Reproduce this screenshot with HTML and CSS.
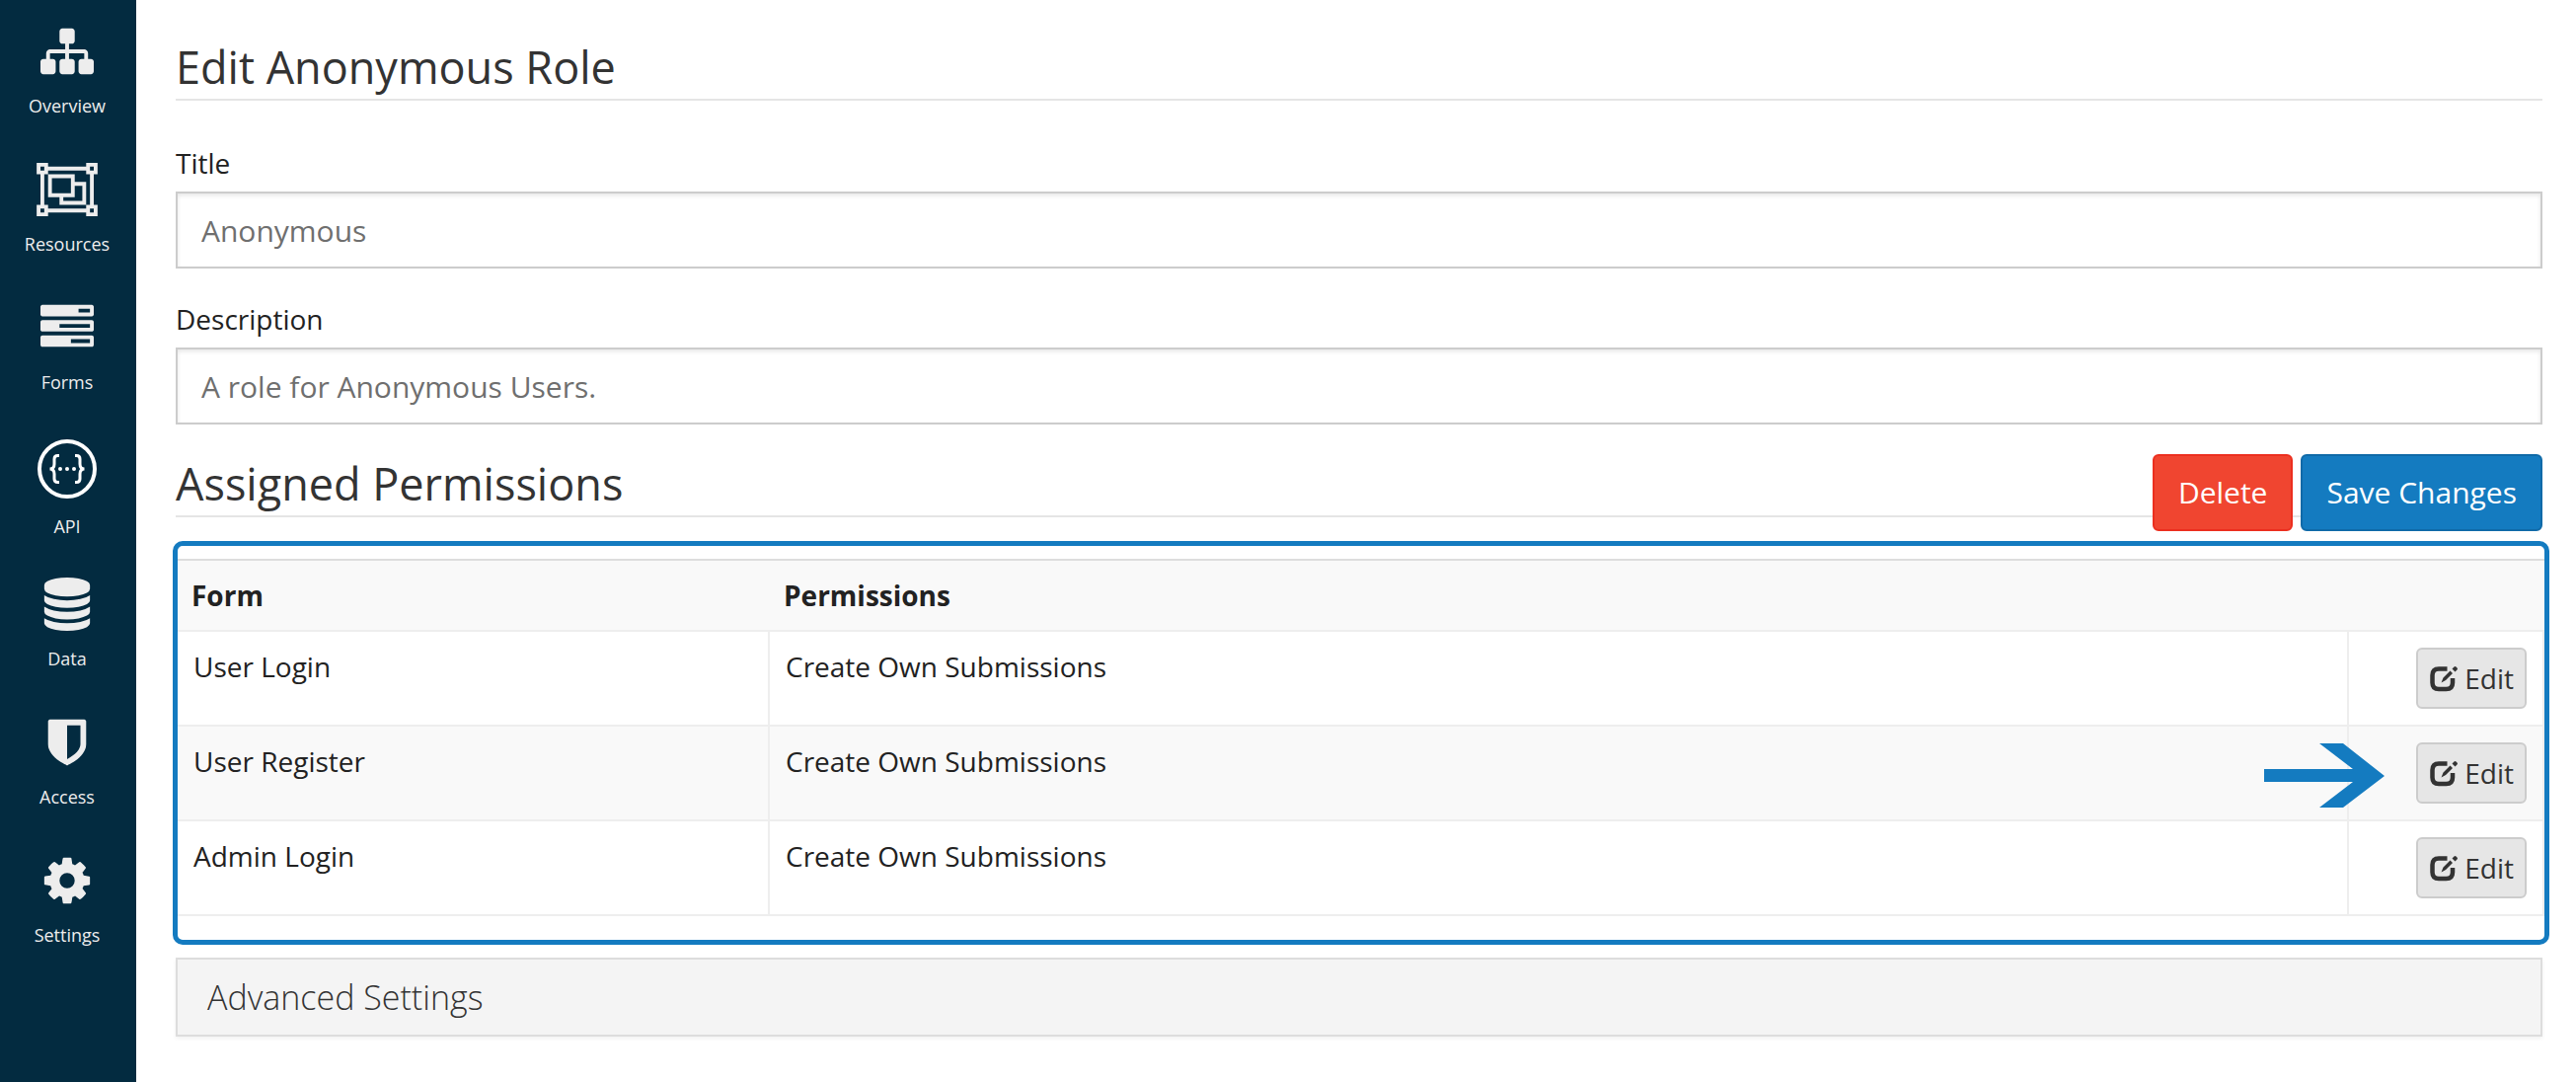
FILE: index.html
```html
<!DOCTYPE html>
<html lang="en">
<head>
<meta charset="utf-8">
<title>Edit Anonymous Role</title>
<link rel="stylesheet" href="styles.css">
</head>
<body>
<svg class="sprite" aria-hidden="true">
  <symbol id="icon-edit" viewBox="0 0 30 28">
    <path d="M18.500 4.500H10Q3.500 4.500 3.500 11V18.500Q3.500 25 10 25H17.500Q24 25 24 18.500V14" fill="none" stroke="currentColor" stroke-width="4.500"/>
    <path d="M12.500 18.500L14.500 13.500L21.500 6.500L24 9L17 16ZM23.500 4.500L25.500 2.500Q26.500 1.500 27.500 2.500L28.500 3.500Q29.500 4.500 28.500 5.500L26.500 7.500Z" fill="currentColor"/>
  </symbol>
</svg>
<div class="layout">
  <nav class="sidebar" aria-label="Project">
    <a class="nav-item" href="#overview">
      <svg class="nav-icon" viewBox="0 0 1792 1792" aria-hidden="true"><path d="M1792 1248v320q0 40-28 68t-68 28h-320q-40 0-68-28t-28-68v-320q0-40 28-68t68-28h96v-192h-512v192h96q40 0 68 28t28 68v320q0 40-28 68t-68 28h-320q-40 0-68-28t-28-68v-320q0-40 28-68t68-28h96v-192h-512v192h96q40 0 68 28t28 68v320q0 40-28 68t-68 28h-320q-40 0-68-28t-28-68v-320q0-40 28-68t68-28h96v-192q0-52 38-90t90-38h512v-192h-96q-40 0-68-28t-28-68v-320q0-40 28-68t68-28h320q40 0 68 28t28 68v320q0 40-28 68t-68 28h-96v192h512q52 0 90 38t38 90v192h96q40 0 68 28t28 68z"/></svg>
      <span>Overview</span>
    </a>
    <a class="nav-item" href="#resources">
      <svg class="nav-icon nav-icon-wide" viewBox="0 0 2048 1792" aria-hidden="true"><path fill-rule="evenodd" d="M2048 384H1920V1408H2048V1792H1664V1664H384V1792H0V1408H128V384H0V0H384V128H1664V0H2048ZM1792 128V256H1920V128ZM128 128V256H256V128ZM128 1536V1664H256V1536ZM1792 1536V1664H1920V1536ZM1664 1536V1408H1792V384H1664V256H384V384H256V1408H384V1536ZM384 384H1280V640H1664V1408H768V1152H384ZM512 512V1024H1152V512ZM1280 768V1152H896V1280H1536V768Z"/></svg>
      <span>Resources</span>
    </a>
    <a class="nav-item" href="#forms">
      <svg class="nav-icon" viewBox="0 0 1792 1792" aria-hidden="true"><path d="M1024 1408h640v-128h-640v128zm-384-512h1024v-128h-1024v128zm640-512h384v-128h-384v128zm512 832v256q0 26-19 45t-45 19h-1664q-26 0-45-19t-19-45v-256q0-26 19-45t45-19h1664q26 0 45 19t19 45zm0-512v256q0 26-19 45t-45 19h-1664q-26 0-45-19t-19-45v-256q0-26 19-45t45-19h1664q26 0 45 19t19 45zm0-512v256q0 26-19 45t-45 19h-1664q-26 0-45-19t-19-45v-256q0-26 19-45t45-19h1664q26 0 45 19t19 45z"/></svg>
      <span>Forms</span>
    </a>
    <a class="nav-item" href="#api">
      <svg class="nav-icon nav-icon-api" viewBox="0 0 60 60" aria-hidden="true">
        <circle cx="30" cy="30" r="28" fill="none" stroke="#fff" stroke-width="4"/>
        <path d="M22 16.500H20.500Q17 16.500 17 20V25Q17 30 12.500 30Q17 30 17 35V40Q17 43.500 20.500 43.500H22M38 16.500H39.500Q43 16.500 43 20V25Q43 30 47.500 30Q43 30 43 35V40Q43 43.500 39.500 43.500H38" fill="none" stroke="#fff" stroke-width="3"/>
        <circle cx="23" cy="30" r="2" fill="#fff"/><circle cx="30" cy="30" r="2" fill="#fff"/><circle cx="37" cy="30" r="2" fill="#fff"/>
      </svg>
      <span>API</span>
    </a>
    <a class="nav-item" href="#data">
      <svg class="nav-icon" viewBox="0 0 1792 1792" aria-hidden="true"><path d="M896 768q237 0 443-43t325-127v170q0 69-103 128t-280 93.500-385 34.500-385-34.500-280-93.500-103-128v-170q119 84 325 127t443 43zm0 768q237 0 443-43t325-127v170q0 69-103 128t-280 93.500-385 34.500-385-34.500-280-93.500-103-128v-170q119 84 325 127t443 43zm0-384q237 0 443-43t325-127v170q0 69-103 128t-280 93.500-385 34.500-385-34.500-280-93.500-103-128v-170q119 84 325 127t443 43zm0-1152q208 0 385 34.500t280 93.500 103 128v128q0 69-103 128t-280 93.500-385 34.500-385-34.500-280-93.500-103-128v-128q0-69 103-128t280-93.500 385-34.500z"/></svg>
      <span>Data</span>
    </a>
    <a class="nav-item" href="#access">
      <svg class="nav-icon" viewBox="0 0 1792 1792" aria-hidden="true"><path d="M1344 960v-640h-448v1137q119-63 213-137 235-184 235-360zm192-768v768q0 86-33.500 170.500t-83 150-118 127.500-126.500 103-121 77.500-89.500 49.500-42.500 20q-12 6-26 6t-26-6q-16-7-42.500-20t-89.500-49.500-121-77.500-126.500-103-118-127.500-83-150-33.500-170.500v-768q0-26 19-45t45-19h1152q26 0 45 19t19 45z"/></svg>
      <span>Access</span>
    </a>
    <a class="nav-item" href="#settings">
      <svg class="nav-icon" viewBox="0 0 1792 1792" aria-hidden="true"><path d="M1152 896q0-106-75-181t-181-75-181 75-75 181 75 181 181 75 181-75 75-181zm512-109v222q0 12-8 23t-20 13l-185 28q-19 54-39 91 35 50 107 138 10 12 10 25t-9 23q-27 37-99 108t-94 71q-12 0-26-9l-138-108q-44 23-91 38-16 136-29 186-7 28-36 28h-222q-14 0-24.500-8.500t-11.500-21.500l-28-184q-49-16-90-37l-141 107q-10 9-25 9-14 0-25-11-126-114-165-168-7-10-7-23 0-12 8-23 15-21 51-66.500t54-70.500q-27-50-41-99l-183-27q-13-2-21-12.500t-8-23.500v-222q0-12 8-23t19-13l186-28q14-46 39-92-40-57-107-138-10-12-10-24 0-10 9-23 26-36 98.500-107.500t94.500-71.500q13 0 26 10l138 107q44-23 91-38 16-136 29-186 7-28 36-28h222q14 0 24.500 8.500t11.500 21.500l28 184q49 16 90 37l142-107q9-9 24-9 13 0 25 10 129 119 165 170 7 8 7 22 0 12-8 23-15 21-51 66.500t-54 70.500q26 50 41 98l183 28q13 2 21 12.500t8 23.500z"/></svg>
      <span>Settings</span>
    </a>
  </nav>

  <main class="content">
    <h1 class="heading">Edit Anonymous Role</h1>
    <form class="role-form">
      <div class="field">
        <label class="field-label" for="title">Title</label>
        <input class="field-input" id="title" type="text" value="Anonymous">
      </div>
      <div class="field">
        <label class="field-label" for="description">Description</label>
        <input class="field-input" id="description" type="text" value="A role for Anonymous Users.">
      </div>
      <div class="section-head">
        <h2 class="heading">Assigned Permissions</h2>
        <div class="actions">
          <button class="btn btn-danger" type="button">Delete</button>
          <button class="btn btn-primary" type="submit">Save Changes</button>
        </div>
      </div>
      <div class="permissions">
        <table class="table">
          <colgroup><col class="col-form"><col><col class="col-actions"></colgroup>
          <thead>
            <tr><th scope="col">Form</th><th scope="col">Permissions</th><td></td></tr>
          </thead>
          <tbody>
            <tr>
              <td>User Login</td><td>Create Own Submissions</td>
              <td class="cell-action"><button class="btn-edit" type="button"><svg class="edit-icon" aria-hidden="true"><use href="#icon-edit"/></svg>Edit</button></td>
            </tr>
            <tr>
              <td>User Register</td><td>Create Own Submissions</td>
              <td class="cell-action">
                <svg class="pointer" viewBox="0 0 122 66" aria-hidden="true"><path d="M0 26H90L56 0H80L122 33L80 65H56L90 39H0Z" fill="#147bc0"/></svg>
                <button class="btn-edit" type="button"><svg class="edit-icon" aria-hidden="true"><use href="#icon-edit"/></svg>Edit</button>
              </td>
            </tr>
            <tr>
              <td>Admin Login</td><td>Create Own Submissions</td>
              <td class="cell-action"><button class="btn-edit" type="button"><svg class="edit-icon" aria-hidden="true"><use href="#icon-edit"/></svg>Edit</button></td>
            </tr>
          </tbody>
        </table>
      </div>
      <button class="accordion" type="button">Advanced Settings</button>
    </form>
  </main>
</div>
</body>
</html>
```
FILE: styles.css
```css
* {
  box-sizing: border-box;
}

body {
  margin: 0;
  background: #fff;
  color: #222;
  font-family: "Open Sans", sans-serif;
  font-size: 28px;
  line-height: 38px;
}

.sprite {
  display: none;
}

.layout {
  display: flex;
  min-height: 100vh;
}

/* Sidebar */

.sidebar {
  display: flex;
  flex-direction: column;
  flex: none;
  width: 138px;
  padding: 25px 2px 0 0;
  background: #032b40;
}

.nav-item {
  display: flex;
  flex-direction: column;
  align-items: center;
  gap: 16px;
  height: 140px;
  color: #ededed;
  font-size: 18px;
  line-height: 24px;
  text-decoration: none;
}

.nav-icon {
  width: 54px;
  height: 54px;
  fill: currentColor;
}

.nav-icon-wide {
  width: 62px;
}

.nav-icon-api {
  width: 60px;
  height: 60px;
}

/* Content */

.content {
  flex: 1;
  min-width: 0;
  padding: 36px 34px 40px 40px;
}

.heading {
  margin: 0;
  border-bottom: 2px solid #e5e5e5;
  color: #333;
  font-size: 45px;
  font-weight: 400;
  line-height: 64px;
}

.role-form {
  padding-top: 44px;
}

.field {
  margin-bottom: 32px;
}

.field-label {
  display: block;
  margin-bottom: 10px;
}

.field-input {
  display: block;
  width: 100%;
  height: 78px;
  padding: 0 24px;
  border: 2px solid #ccc;
  box-shadow: inset 0 2px 4px rgba(0, 0, 0, 0.1);
  background: #fff;
  color: #6f6f6f;
  font: inherit;
  font-size: 30px;
}

.section-head {
  display: grid;
  margin-top: -4px;
}

.section-head > * {
  grid-area: 1 / 1;
}

.section-head .heading {
  align-self: start;
}

.actions {
  display: flex;
  gap: 8px;
  justify-self: end;
  padding-top: 2px;
}

.btn {
  height: 78px;
  padding: 0 24px;
  border: 2px solid;
  border-radius: 6px;
  color: #fff;
  font: inherit;
  font-size: 30px;
}

.btn-danger {
  border-color: #ec2f1f;
  background: #f04530;
}

.btn-primary {
  border-color: #106aa8;
  background: #147bc0;
}

.permissions {
  margin: 10px -7px 13px -3px;
  padding: 13px 0 24px;
  border: 5px solid #147bc0;
  border-radius: 10px;
}

.table {
  width: 100%;
  border-collapse: separate;
  border-spacing: 0;
  border-top: 2px solid #ddd;
  table-layout: fixed;
}

.col-form {
  width: 600px;
}

.col-actions {
  width: 198px;
}

.table th,
.table td {
  border-bottom: 2px solid #eee;
  text-align: left;
  vertical-align: top;
}

.table th,
.table thead td {
  padding: 16px 14px;
  background: #f9f9f9;
  font-weight: 700;
}

.table tbody td {
  padding: 16px;
  border-right: 2px solid #eee;
}

.table tbody tr:nth-child(even) {
  background: #f9f9f9;
}

.table tbody .cell-action {
  position: relative;
  text-align: right;
}

.pointer {
  position: absolute;
  top: 17px;
  left: -86px;
  width: 122px;
  height: 66px;
}

.btn-edit {
  display: inline-flex;
  align-items: center;
  gap: 6px;
  height: 62px;
  padding: 0 11px;
  border: 2px solid #ccc;
  border-radius: 6px;
  background: #e6e6e6;
  color: #333;
  font: inherit;
  vertical-align: top;
}

.edit-icon {
  width: 30px;
  height: 28px;
}

.accordion {
  display: block;
  width: 100%;
  height: 80px;
  padding: 0 30px;
  border: 2px solid #ddd;
  box-shadow: 0 2px 4px rgba(0, 0, 0, 0.06);
  background: #f4f4f4;
  color: #333;
  font: inherit;
  font-size: 34px;
  font-weight: 300;
  text-align: left;
}
```
